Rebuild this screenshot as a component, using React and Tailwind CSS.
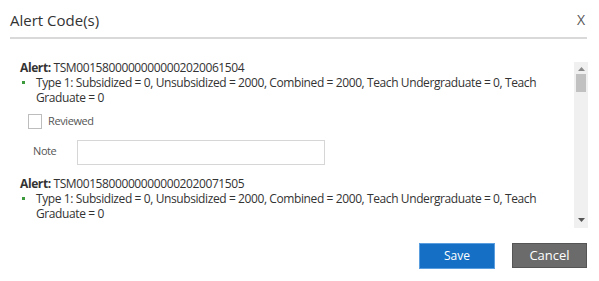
export default function App() {
  const alerts = [
    { code: "TSM00158000000000002020061504" },
    { code: "TSM00158000000000002020071505" },
    { code: "TSM00158000000000002020081506" },
  ];

  return (
    <div className="w-[599px] h-[281px] bg-white overflow-hidden text-[#333] font-['Open_Sans',sans-serif]">
      <header className="flex items-center justify-between h-[37px] pl-[10px] pr-[14px]">
        <h1 className="text-[15px] leading-[20px] pt-[2px]">Alert Code(s)</h1>
        <button className="text-[14px] leading-[20px] pt-[2px] text-[#555]">X</button>
      </header>
      <div className="ml-[10px] w-[577px] h-[2px] bg-[#d9d9d9]" />

      <div className="flex ml-[10px] mt-[21px] w-[578px] h-[168px]">
        <div className="flex-1 overflow-hidden pl-[10px] pr-[16px] tracking-[-0.4px]">
          {alerts.map((a) => (
            <div key={a.code} className="pb-[11px]">
              <div className="text-[12px] leading-[15px]">
                <span className="font-bold">Alert:</span> {a.code}
              </div>
              <div className="flex text-[12px] leading-[15px]">
                <span className="w-[16px] shrink-0 pl-[2px] pt-[6px]">
                  <span className="block w-[3px] h-[3px] bg-[#3c9a3c]" />
                </span>
                <span>
                  Type 1: Subsidized = 0, Unsubsidized = 2000, Combined = 2000, Teach Undergraduate = 0, Teach Graduate = 0
                </span>
              </div>
              <label className="flex items-center gap-[6px] ml-[8px] mt-[9px] h-[15px]">
                <span className="w-[14px] h-[15px] border border-[#bdbdbd] bg-white" />
                <span className="text-[11px] text-[#555]">Reviewed</span>
              </label>
              <div className="flex items-start mt-[11px]">
                <span className="w-[57px] pl-[13px] text-[11px] leading-[15px] text-[#555] pt-[3px]">Note</span>
                <input className="w-[248px] h-[25px] border border-[#d6d6d6] outline-none" />
              </div>
            </div>
          ))}
        </div>
        <div className="w-[14px] mt-[2px] bg-[#f0f0f0] flex flex-col items-center">
          <svg width="7" height="4" viewBox="0 0 7 4" className="mt-[5px]">
            <path d="M0 4 L3.5 0 L7 4 Z" fill="#8a8a8a" />
          </svg>
          <div className="w-[10px] h-[18px] mt-[3px] bg-[#c1c1c1]" />
          <div className="flex-1" />
          <svg width="7" height="4" viewBox="0 0 7 4" className="mb-[6px]">
            <path d="M0 0 L7 0 L3.5 4 Z" fill="#555" />
          </svg>
        </div>
      </div>

      <div className="flex justify-end gap-[17px] mt-[15px] pr-[12px]">
        <button className="w-[76px] h-[26px] bg-[#146fc5] border border-[#5a9ee0] text-white text-[12px]">
          Save
        </button>
        <button className="w-[75px] h-[25px] bg-[#6b6b6b] border border-[#555] text-white text-[13px]">
          Cancel
        </button>
      </div>
    </div>
  );
}
